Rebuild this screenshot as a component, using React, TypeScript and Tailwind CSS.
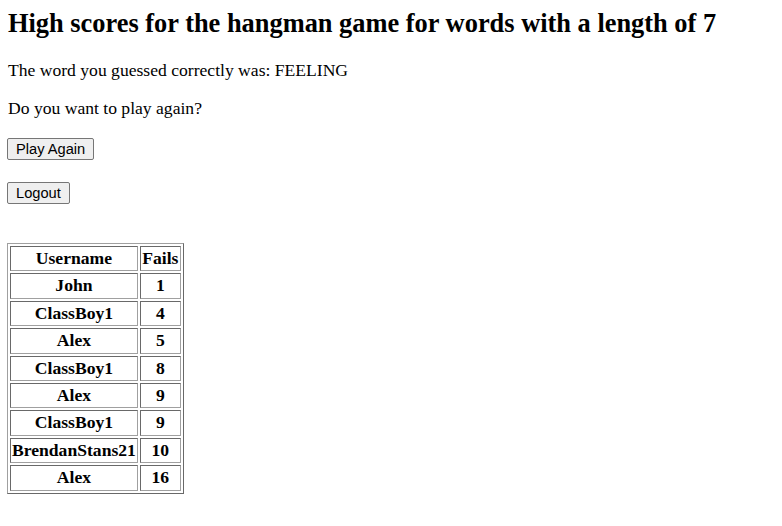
export default function App() {
  const scores = [
    { name: "John", fails: 1 },
    { name: "ClassBoy1", fails: 4 },
    { name: "Alex", fails: 5 },
    { name: "ClassBoy1", fails: 8 },
    { name: "Alex", fails: 9 },
    { name: "ClassBoy1", fails: 9 },
    { name: "BrendanStans21", fails: 10 },
    { name: "Alex", fails: 16 },
  ];

  const cell =
    "border border-t-[#696969] border-l-[#696969] border-r-[#a0a0a0] border-b-[#a0a0a0] p-[1px] leading-[21.4px] text-center font-bold whitespace-nowrap";
  const btn =
    "h-[22px] px-[8px] border border-[#767676] bg-[#efefef] rounded-[2px] text-[14.67px] leading-none text-black font-['Liberation_Sans',Arial,sans-serif]";

  return (
    <div className="min-h-screen bg-white text-black px-[8px] pt-[8px] font-['Liberation_Serif','Times_New_Roman',serif]">
      <h1 className="text-[26.4px] leading-[30px] font-bold">
        High scores for the hangman game for words with a length of 7
      </h1>
      <p className="mt-[22px] text-[17.6px] leading-[21px]">
        The word you guessed correctly was: FEELING
      </p>
      <p className="mt-[17px] text-[17.6px] leading-[21px]">Do you want to play again?</p>

      <div className="mt-[19px] -ml-[1px] flex">
        <button className={btn}>Play Again</button>
      </div>
      <div className="mt-[22px] -ml-[1px] flex">
        <button className={btn}>Logout</button>
      </div>

      <table className="mt-[39px] -ml-[1px] border-separate border-spacing-[2px] border border-t-[#a0a0a0] border-l-[#a0a0a0] border-r-[#696969] border-b-[#696969] text-[17.6px]">
        <thead>
          <tr>
            <th className={`${cell} w-[127px]`}>Username</th>
            <th className={`${cell} w-[41px]`}>Fails</th>
          </tr>
        </thead>
        <tbody>
          {scores.map((s, i) => (
            <tr key={i}>
              <td className={cell}>{s.name}</td>
              <td className={cell}>{s.fails}</td>
            </tr>
          ))}
        </tbody>
      </table>
    </div>
  );
}
